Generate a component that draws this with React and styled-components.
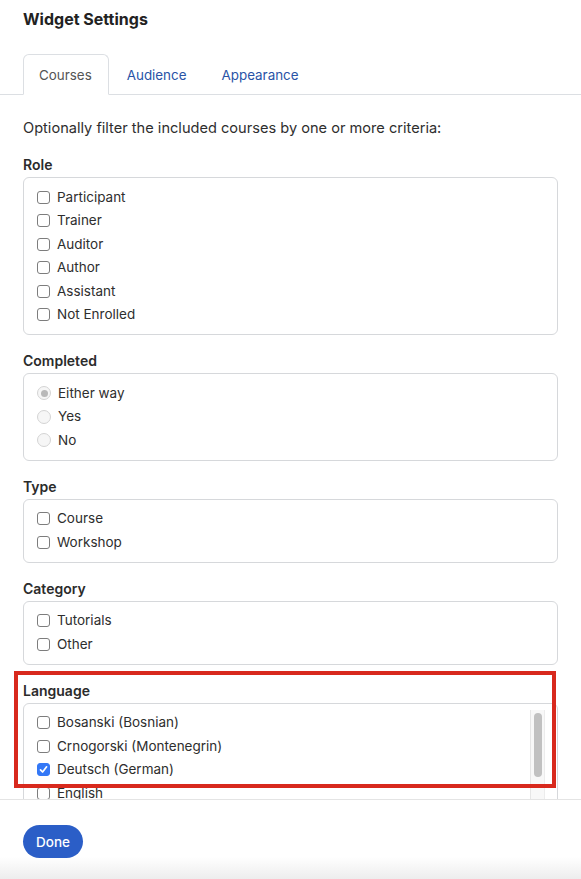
import React from 'react';
import styled, { createGlobalStyle, css } from 'styled-components';

const GlobalStyle = createGlobalStyle`
    html, body {
        margin: 0;
        padding: 0;
        background: #fff;
    }
    body {
        font-family: Inter, "Noto Sans", "Liberation Sans", sans-serif;
        font-size: 14px;
        color: #2e2e2e;
    }
`;

const Modal = styled.div`
    height: 879px;
    display: flex;
    flex-direction: column;
    background: #fff;
    overflow: hidden;
`;

const Header = styled.header`
    padding-top: 7px;
`;

const Title = styled.h1`
    margin: 0 0 23px;
    padding: 0 23px;
    font-size: 16px;
    line-height: 24px;
    font-weight: 700;
    color: #222;
`;

const Tabs = styled.nav`
    display: flex;
    padding: 0 23px;
    border-bottom: 1px solid #dcdfe3;
`;

const Tab = styled.a`
    display: block;
    height: 41px;
    box-sizing: border-box;
    margin-bottom: -1px;
    padding: 9px 16px 0 15px;
    font-size: 13.4px;
    line-height: 22px;
    border: 1px solid transparent;
    border-radius: 6px 6px 0 0;
    color: #2953a6;
    cursor: pointer;

    & + & {
        padding-left: 17px;
    }

    ${props => props.active && css`
        color: #555;
        background: #fff;
        border-color: #dcdfe3 #dcdfe3 #fff;
    `}
`;

const Body = styled.main`
    flex: 1;
    min-height: 0;
    overflow: hidden;
    padding: 23px 23px 0 23px;
`;

const Intro = styled.p`
    margin: 0;
    font-size: 14.6px;
    line-height: 21px;
`;

const Group = styled.section`
    position: relative;
    margin-top: 16px;

    ${props => props.highlight && css`
        &::after {
            content: '';
            position: absolute;
            top: -10px;
            left: -9px;
            width: 542px;
            height: 117px;
            box-sizing: border-box;
            border: 4px solid #d8291d;
            pointer-events: none;
            z-index: 2;
        }
    `}
`;

const GroupLabel = styled.div`
    font-weight: 600;
    line-height: 20px;
    margin-bottom: 2px;
    color: #2b2b2b;
`;

const OptionBox = styled.div`
    border: 1px solid #d6d8db;
    border-radius: 6px;
    padding: 7.5px 13px;
    background: #fff;
`;

const ScrollBox = styled.div`
    display: flex;
    align-items: flex-start;
    border: 1px solid #d6d8db;
    border-radius: 6px;
    padding: 6px 12px 0 0;
    background: #fff;
`;

const ScrollList = styled.div`
    flex: 1;
    height: 150px;
    overflow: hidden;
    padding: 1.5px 0 0 13px;
`;

const ScrollTrack = styled.div`
    flex: none;
    width: 15px;
    height: 150px;
    box-sizing: border-box;
    padding: 3px 2px 0 3px;
    background: #f8f8f8;
    border-left: 1px solid #e6e6e6;
    border-right: 1px solid #ececec;
`;

const ScrollThumb = styled.div`
    height: 64px;
    border-radius: 4px;
    background: #c1c1c1;
`;

const Option = styled.label`
    display: flex;
    align-items: center;
    gap: 7px;
    height: 23.5px;
    font-size: 13.5px;
    line-height: 21px;
    color: #2e2e2e;
`;

const CheckBox = styled.span`
    flex: none;
    width: 13px;
    height: 13px;
    box-sizing: border-box;
    border: 1px solid ${props => props.checked ? '#3478f6' : '#7d7d7d'};
    border-radius: 3px;
    background: ${props => props.checked ? '#3478f6' : '#fff'};
    display: flex;
    align-items: center;
    justify-content: center;
`;

const Radio = styled.span`
    flex: none;
    width: 14px;
    height: 14px;
    box-sizing: border-box;
    border: 1px solid #d4d4d4;
    border-radius: 50%;
    background: #f6f6f6;
    display: flex;
    align-items: center;
    justify-content: center;

    &::after {
        content: '';
        width: 7px;
        height: 7px;
        border-radius: 50%;
        background: ${props => props.checked ? '#b9b9b9' : 'transparent'};
    }
`;

const Footer = styled.footer`
    flex: none;
    height: 80px;
    box-sizing: border-box;
    border-top: 1px solid #e4e4e4;
    padding: 25px 23px 0;
    background: linear-gradient(to bottom, #fff 0%, #fff 72%, #ededed 100%);
`;

const DoneButton = styled.button`
    height: 33px;
    padding: 0 13px;
    border: none;
    border-radius: 17px;
    background: #2b5ec7;
    color: #fff;
    font-family: inherit;
    font-size: 13.5px;
    font-weight: 500;
    cursor: pointer;
`;

const Check = () => (
    <svg width="9" height="9" viewBox="0 0 9 9">
        <path d="M1.5 4.8 L3.6 7 L7.6 1.8" fill="none" stroke="#fff" strokeWidth="1.7" strokeLinecap="round" strokeLinejoin="round" />
    </svg>
);

const CheckOption = ({ label, checked }) => (
    <Option>
        <CheckBox checked={checked}>{checked && <Check />}</CheckBox>
        {label}
    </Option>
);

const RadioOption = ({ label, checked }) => (
    <Option>
        <Radio checked={checked} />
        {label}
    </Option>
);

const groups = [
    { title: 'Role', items: ['Participant', 'Trainer', 'Auditor', 'Author', 'Assistant', 'Not Enrolled'] },
    { title: 'Completed', radio: true, items: ['Either way', 'Yes', 'No'] },
    { title: 'Type', items: ['Course', 'Workshop'] },
    { title: 'Category', items: ['Tutorials', 'Other'] },
];

// only the rows that show above the footer
const languages = [
    'Bosanski (Bosnian)',
    'Crnogorski (Montenegrin)',
    'Deutsch (German)',
    'English',
];

const App = () => (
    <>
        <GlobalStyle />
        <Modal>
            <Header>
                <Title>Widget Settings</Title>
                <Tabs>
                    <Tab active>Courses</Tab>
                    <Tab>Audience</Tab>
                    <Tab>Appearance</Tab>
                </Tabs>
            </Header>
            <Body>
                <Intro>Optionally filter the included courses by one or more criteria:</Intro>
                {groups.map(group => (
                    <Group key={group.title}>
                        <GroupLabel>{group.title}</GroupLabel>
                        <OptionBox>
                            {group.items.map((item, i) => group.radio
                                ? <RadioOption key={item} label={item} checked={i === 0} />
                                : <CheckOption key={item} label={item} />
                            )}
                        </OptionBox>
                    </Group>
                ))}
                <Group highlight>
                    <GroupLabel>Language</GroupLabel>
                    <ScrollBox>
                        <ScrollList>
                            {languages.map(lang => (
                                <CheckOption key={lang} label={lang} checked={lang === 'Deutsch (German)'} />
                            ))}
                        </ScrollList>
                        <ScrollTrack>
                            <ScrollThumb />
                        </ScrollTrack>
                    </ScrollBox>
                </Group>
            </Body>
            <Footer>
                <DoneButton>Done</DoneButton>
            </Footer>
        </Modal>
    </>
);

export default App;
